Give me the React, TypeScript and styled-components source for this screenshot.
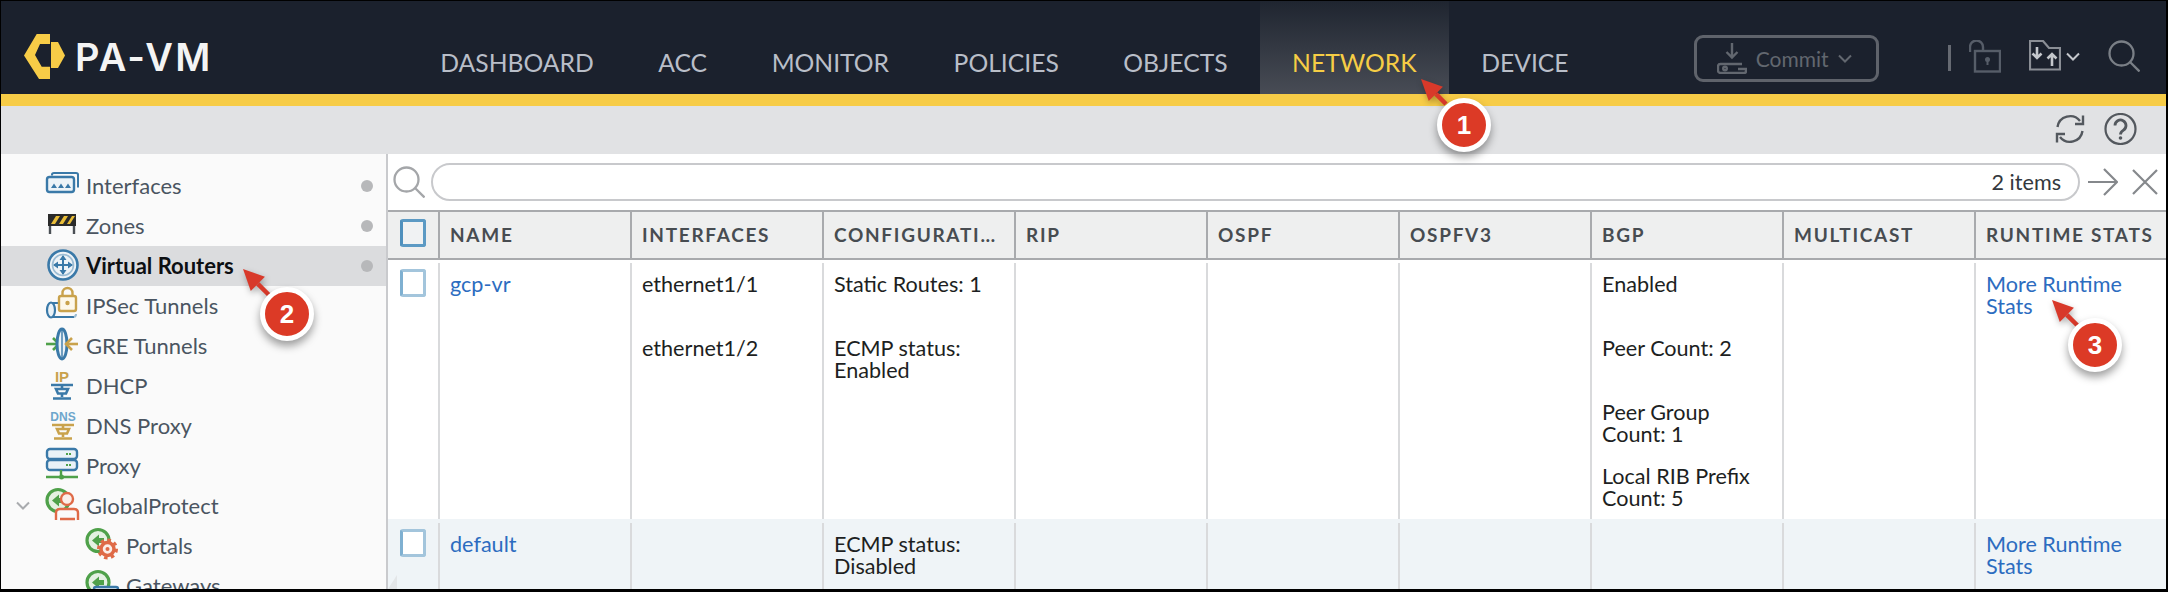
import React from "react";
import styled, { createGlobalStyle } from "styled-components";

const Global = createGlobalStyle`
  html, body { margin: 0; padding: 0; background: #000; }
  * { box-sizing: border-box; }
  body { font-family: Lato, "Open Sans", sans-serif; }
`;

const Frame = styled.div`
  position: relative;
  width: 2168px;
  height: 592px;
  overflow: hidden;
  display: flex;
  flex-direction: column;
  background: #fafafa;
  border-style: solid;
  border-color: #000;
  border-width: 1px 2px 3px 1px;
`;

const Header = styled.header`
  flex: none;
  height: 93px;
  background: #1b212d;
  display: flex;
  align-items: stretch;
`;

const Brand = styled.div`
  width: 407px;
  flex: none;
  padding: 33px 0 0 23px;
  display: flex;
  align-items: flex-start;
  gap: 10px;
`;

const BrandName = styled.span`
  font-family: Inter, sans-serif;
  font-weight: 600;
  font-size: 38px;
  line-height: 46px;
  letter-spacing: 2.2px;
  color: #f4f4f4;
`;

const Nav = styled.nav`
  display: flex;
`;

const Tab = styled.div<{ $active?: boolean }>`
  padding: 47px 32.25px 0;
  font-size: 24.7px;
  line-height: 30px;
  color: ${(p) => (p.$active ? "#f6cd45" : "#b9bec8")};
  background: ${(p) => (p.$active ? "linear-gradient(#1f2530, #484c55)" : "none")};
`;

const Tools = styled.div`
  display: flex;
  align-items: flex-start;
  margin-left: 93px;
  padding-top: 34px;
`;

const CommitButton = styled.div`
  width: 185px;
  height: 47px;
  border: 3px solid #5f636b;
  border-radius: 9px;
  display: flex;
  align-items: center;
  padding-left: 20px;
  gap: 9px;
  color: #62676f;
  font-size: 21px;
`;

const Pipe = styled.div`
  width: 3px;
  height: 26px;
  background: #666a72;
  margin: 10px 18px 0 69px;
`;

const Glyph = styled.svg`
  display: block;
  flex: none;
`;

const ToolIcon = styled(Glyph)<{ $gap?: number }>`
  margin-top: 5px;
  margin-right: ${(p) => p.$gap ?? 0}px;
`;

const ToolSlot = styled.div<{ $gap?: number; $top?: number }>`
  flex: none;
  margin-top: ${(p) => p.$top ?? 5}px;
  margin-right: ${(p) => p.$gap ?? 0}px;
`;

const CloseGlyph = styled(Glyph)`
  margin-left: 14px;
`;

const YellowBar = styled.div`
  flex: none;
  height: 12px;
  background: #f7cc47;
`;

const SubBar = styled.div`
  flex: none;
  height: 48px;
  background: #e1e2e4;
  display: flex;
  justify-content: flex-end;
  align-items: center;
  gap: 19px;
  padding: 0 29px 2px 0;
`;

const Body = styled.div`
  flex: 1;
  min-height: 0;
  display: flex;
`;

const Sidebar = styled.aside`
  flex: none;
  width: 387px;
  padding-top: 12px;
  background: #fafafa;
  border-right: 2px solid #c9cacd;
  overflow: hidden;
`;

const TreeRow = styled.div<{ $selected?: boolean; $depth?: number }>`
  height: 40px;
  display: flex;
  align-items: center;
  padding-left: ${(p) => 13 + (p.$depth ?? 0) * 40}px;
  padding-right: 13px;
  background: ${(p) => (p.$selected ? "#dbdcde" : "transparent")};
  font-size: 22px;
  font-weight: ${(p) => (p.$selected ? 700 : 400)};
  color: ${(p) => (p.$selected ? "#0d0f12" : "#4a5561")};
`;

const Chevron = styled.span`
  width: 32px;
  flex: none;
  display: flex;
  align-items: center;
`;

const TreeIcon = styled.svg`
  flex: none;
  display: block;
  width: 32px;
  height: 36px;
  margin-right: 8px;
  overflow: visible;
`;

const TreeLabel = styled.span`
  flex: 1;
  white-space: nowrap;
  padding-bottom: 2px;
`;

const Dot = styled.span`
  width: 12px;
  height: 12px;
  border-radius: 50%;
  background: #b7b8ba;
`;

const Main = styled.main`
  position: relative;
  flex: none;
  width: 1778px;
  display: flex;
  flex-direction: column;
  background: #fff;
`;

const SearchRow = styled.div`
  flex: none;
  height: 56px;
  display: flex;
  align-items: center;
  padding: 0 8px 0 5px;
`;

const SearchField = styled.div`
  width: 1649px;
  height: 38px;
  margin: 0 8px 1px 6px;
  border: 2px solid #c8c9cc;
  border-radius: 20px;
  display: flex;
  align-items: center;
  justify-content: flex-end;
  padding-right: 17px;
  font-size: 21.6px;
  color: #33383d;
`;

const Grid = styled.div`
  display: grid;
  grid-template-columns: 50px repeat(9, 192px);
`;

const HeadRow = styled(Grid)`
  flex: none;
  height: 50px;
  background: #eeefef;
  border-top: 2px solid #a8aaad;
  border-bottom: 2px solid #a8aaad;
`;

const HeadCell = styled.div`
  border-left: 2px solid #a8aaad;
  padding: 0 12px 0 10px;
  font-size: 19px;
  font-weight: 700;
  line-height: 46px;
  letter-spacing: 1.7px;
  color: #474c51;
  white-space: nowrap;
  overflow: hidden;
  text-overflow: ellipsis;
`;

const CheckCell = styled.div<{ $top: number }>`
  padding: ${(p) => p.$top}px 0 0 12px;
`;

const CheckBox = styled.div<{ $strong?: boolean }>`
  width: 26px;
  height: 28px;
  border: 3px solid ${(p) => (p.$strong ? "#5c9ac4" : "#a3c5dc")};
  border-left-color: ${(p) => (p.$strong ? "#4f90bd" : "#7fb0d1")};
  border-radius: 3px;
  background: ${(p) => (p.$strong ? "#f0f2f3" : "#fff")};
`;

const DataRow = styled(Grid)<{ $alt?: boolean; $top: number; $grow?: boolean }>`
  padding-top: ${(p) => p.$top}px;
  flex: ${(p) => (p.$grow ? 1 : "none")};
  background: ${(p) => (p.$alt ? "#eff4f7" : "#fff")};
`;

const DataCell = styled.div`
  border-left: 2px solid #d9dadc;
  padding: 10px 10px 10px 10px;
  font-size: 21.6px;
  line-height: 22px;
  color: #1d1f22;
`;

const Item = styled.div`
  min-height: 64px;
  &:last-child {
    min-height: 0;
  }
`;

const LinkText = styled.span`
  color: #2c6cc0;
`;

const ResizeGrip = styled.svg`
  position: absolute;
  left: 0;
  bottom: 0;
  display: block;
`;

const Overlay = styled.svg`
  position: absolute;
  left: -1px;
  top: -1px;
  pointer-events: none;
  filter: drop-shadow(1px 3px 3px rgba(0, 0, 0, 0.3));
`;

const Badge = styled.div<{ $x: number; $y: number }>`
  position: absolute;
  left: ${(p) => p.$x - 28}px;
  top: ${(p) => p.$y - 28}px;
  width: 54px;
  height: 54px;
  border-radius: 50%;
  background: #dc3a26;
  border: 5px solid #fff;
  box-shadow: 0 5px 9px rgba(0, 0, 0, 0.38);
  display: flex;
  align-items: center;
  justify-content: center;
  font-family: "Liberation Sans", Arial, sans-serif;
  font-weight: 700;
  font-size: 26px;
  color: #fff;
`;

const BLUE = "#3a79a8";
const GOLD = "#c9a24c";
const GREEN = "#4fa14a";
const ORANGE = "#df6a47";

const Logo = () => (
  <Glyph width="41" height="45" viewBox="0 0 41 45" fill="#f7cc47">
    <path d="M12.7 0H26v10H16l-5 11 6.7 11.700H26V45H15L0 21.500z" />
    <path d="M27 8h7l7 13.500-7 12.500h-7z" />
  </Glyph>
);

const CommitIcon = () => (
  <Glyph width="30" height="31" viewBox="0 0 30 31" fill="none" stroke="#62676f" strokeWidth="2.400">
    <path d="M15 0v14M9.500 9l5.500 5.500L20.500 9" />
    <path d="M25 21H3.500a2.500 2.500 0 0 0-2.500 2.500v4a2.500 2.500 0 0 0 2.500 2.500H27a2 2 0 0 0 2-2V26h-8" />
    <circle cx="8" cy="25.500" r="1.800" />
  </Glyph>
);

const SmallChevron = ({ color, w = 14 }: { color: string; w?: number }) => (
  <Glyph width={w} height="10" viewBox="0 0 14 10" fill="none" stroke={color} strokeWidth="2">
    <path d="M1 1.500l6 6 6-6" />
  </Glyph>
);

const LockIcon = () => (
  <ToolIcon width="32" height="33" viewBox="0 0 32 33" fill="none" stroke="#565d68" $gap={28}>
    <path d="M1 12V7a6.500 6.500 0 0 1 13 0v3" strokeWidth="2.400" />
    <rect x="6" y="11" width="25" height="20.500" strokeWidth="2.400" />
    <circle cx="18.500" cy="19.500" r="2.500" fill="#565d68" stroke="none" />
    <path d="M18.500 20v5" strokeWidth="2" />
  </ToolIcon>
);

const FolderIcon = () => (
  <ToolIcon width="32" height="31" viewBox="0 0 32 31" fill="none" stroke="#8a8e95" $gap={5}>
    <path d="M1 1h13l6 7h11v21.500H1z" strokeWidth="2.200" />
    <path d="M8 7v11M3.500 13.500L8 18l4.500-4.500M23 26V14M18.500 18.500L23 14l4.500 4.500" stroke="#c4c7cc" strokeWidth="2.600" />
  </ToolIcon>
);

const SearchGlass = ({ color, size }: { color: string; size: number }) => (
  <Glyph width={size} height={size} viewBox="0 0 32 32" fill="none" stroke={color} strokeWidth="2.300">
    <circle cx="13.500" cy="13.500" r="12" />
    <path d="M22 22l9.500 9.500" />
  </Glyph>
);

const RefreshIcon = () => (
  <Glyph width="30" height="30" viewBox="0 0 30 30" fill="none" stroke="#53585e" strokeWidth="2.400">
    <path d="M2.500 13A12.700 12.700 0 0 1 25 7" />
    <path d="M27.500 17A12.700 12.700 0 0 1 5 23" />
    <path d="M28 1.500V10h-8" />
    <path d="M2 28.500V20h8" />
  </Glyph>
);

const HelpIcon = () => (
  <Glyph width="33" height="32" viewBox="0 0 33 32" fill="none" stroke="#53585e" strokeWidth="2.200">
    <ellipse cx="16.500" cy="16" rx="15" ry="15" />
    <path d="M11 12.500a5.500 5.500 0 1 1 8.500 4.600c-2 1.300-3 2-3 4.400" strokeWidth="2.800" />
    <circle cx="16.500" cy="25" r="1.800" fill="#53585e" stroke="none" />
  </Glyph>
);

const NetTree = ({ color }: { color: string }) => (
  <g fill="none" stroke={color} strokeWidth="2.600">
    <path d="M3 15h22M14 15v3" />
    <path d="M8 19h12l-2 4.500h-8z" />
    <path d="M14 24v3M5 28.500h18" />
  </g>
);

type IconKind = "interfaces" | "zones" | "router" | "ipsec" | "gre" | "dhcp" | "dns" | "proxy" | "gp" | "portals" | "gateways";

const Globe = () => (
  <g>
    <circle cx="12" cy="12.500" r="11" fill="#e4f1e2" stroke={GREEN} strokeWidth="3.200" />
    <path d="M6 12.500l7-6v3.500h5v5h-5v3.500z" fill={GREEN} />
  </g>
);

const TreeGlyph = ({ kind }: { kind: IconKind }) => {
  const body = () => {
    switch (kind) {
      case "interfaces":
        return (
          <g>
            <path d="M6 7.500V6.500Q6 5 8 5h22q2 0 2 1.500v13" fill="none" stroke={BLUE} strokeWidth="2" />
            <rect x="1" y="9" width="27" height="15" rx="2.500" fill="#eef4f8" stroke={BLUE} strokeWidth="2.400" />
            <path d="M5 20l3-4.500 3 4.500zM12 20l3-4.500 3 4.500zM19 20l3-4.500 3 4.500z" fill={BLUE} />
          </g>
        );
      case "zones":
        return (
          <g>
            <rect x="2" y="6" width="28" height="12" fill="#2a2a2a" />
            <path d="M5 16l5-8h4l-5 8zM13 16l5-8h4l-5 8zM21 16l5-8h3l-5 8z" fill="#e9bd37" />
            <path d="M4 18v8M28 18v8" stroke="#4a4f54" strokeWidth="2.400" />
          </g>
        );
      case "router":
        return (
          <g fill="none" stroke={BLUE}>
            <circle cx="17" cy="17" r="14.500" strokeWidth="2.600" fill="#eef3f7" />
            <circle cx="17" cy="17" r="10.500" stroke="#9dbdd4" strokeWidth="1.600" />
            <path d="M17 8v18M8 17h18" strokeWidth="2" />
            <path d="M13.500 12l3.500-5 3.500 5zM13.500 22l3.500 5 3.500-5zM12 13.500l-5 3.500 5 3.500zM22 13.500l5 3.500-5 3.500z" fill={BLUE} stroke="none" />
          </g>
        );
      case "ipsec":
        return (
          <g fill="none">
            <path d="M5 15h11M5 29h23" stroke={BLUE} strokeWidth="2.200" />
            <ellipse cx="5" cy="22" rx="4" ry="7.500" stroke={BLUE} strokeWidth="2.200" fill="#eaf2f7" />
            <path d="M28 29a3 3 0 0 0 2-3" stroke="#9dbdd4" strokeWidth="2" />
            <rect x="13" y="8" width="17" height="15" rx="2" fill="#fdf8ea" stroke={GOLD} strokeWidth="2.400" />
            <path d="M16.500 8V5a5 5 0 0 1 10 0v3" stroke={GOLD} strokeWidth="2.400" />
            <circle cx="21.500" cy="15" r="2.200" fill={GOLD} />
          </g>
        );
      case "gre":
        return (
          <g fill="none">
            <path d="M0 16h11" stroke={GREEN} strokeWidth="2.600" />
            <path d="M7 10l6 6-6 6" stroke={GREEN} strokeWidth="2.600" />
            <ellipse cx="16" cy="16" rx="5" ry="15" fill="#eaf2f7" stroke={BLUE} strokeWidth="3" />
            <path d="M16 1v30" stroke={BLUE} strokeWidth="1.400" />
            <path d="M32 16H22" stroke={GOLD} strokeWidth="2.600" />
            <path d="M26 10l-6 6 6 6" stroke={GOLD} strokeWidth="2.600" />
          </g>
        );
      case "dhcp":
        return (
          <g>
            <text x="16" y="14" textAnchor="middle" fontFamily="Liberation Sans, sans-serif" fontWeight="700" fontSize="15" fill={GOLD}>IP</text>
            <g transform="translate(2 2)"><NetTree color={BLUE} /></g>
          </g>
        );
      case "dns":
        return (
          <g>
            <text x="17" y="13" textAnchor="middle" fontFamily="Liberation Sans, sans-serif" fontWeight="700" fontSize="12" fill="#6ea6cc">DNS</text>
            <g transform="translate(3 2)"><NetTree color={GOLD} /></g>
          </g>
        );
      case "proxy":
        return (
          <g>
            <rect x="1" y="1" width="30" height="10" rx="3" fill="#eaf2f7" stroke={BLUE} strokeWidth="2.400" />
            <rect x="1" y="12" width="30" height="10" rx="3" fill="#eaf2f7" stroke={BLUE} strokeWidth="2.400" />
            <path d="M20 6h6M20 17h6" stroke={GREEN} strokeWidth="2" strokeDasharray="2 1" />
            <path d="M15 22v5M0 29h32" stroke={GREEN} strokeWidth="2.400" />
            <circle cx="15.500" cy="29" r="2.500" fill={GREEN} />
          </g>
        );
      case "gp":
        return (
          <g>
            <Globe />
            <circle cx="21" cy="11" r="6" fill="#fbeee9" stroke={ORANGE} strokeWidth="2.400" />
            <path d="M10 32v-7q0-4 4-4h14q4 0 4 4v7M14 31h15" fill="#fafafa" stroke={ORANGE} strokeWidth="2.400" />
          </g>
        );
      case "portals":
        return (
          <g>
            <Globe />
            <circle cx="21.500" cy="21" r="6.500" fill="#fbeee9" stroke={ORANGE} strokeWidth="3.500" />
            <circle cx="21.500" cy="21" r="9" fill="none" stroke={ORANGE} strokeWidth="3" strokeDasharray="3.500 3.500" />
            <circle cx="21.500" cy="21" r="2" fill={ORANGE} />
          </g>
        );
      case "gateways":
        return (
          <g transform="translate(0 2)">
            <Globe />
            <rect x="8" y="17" width="24" height="12" rx="2" fill="#eaf2f7" stroke={BLUE} strokeWidth="2.400" />
          </g>
        );
    }
  };
  return <TreeIcon viewBox="0 0 32 36">{body()}</TreeIcon>;
};

const treeItems: { label: string; icon: IconKind; dot?: boolean; selected?: boolean; depth?: number; open?: boolean }[] = [
  { label: "Interfaces", icon: "interfaces", dot: true },
  { label: "Zones", icon: "zones", dot: true },
  { label: "Virtual Routers", icon: "router", dot: true, selected: true },
  { label: "IPSec Tunnels", icon: "ipsec" },
  { label: "GRE Tunnels", icon: "gre" },
  { label: "DHCP", icon: "dhcp" },
  { label: "DNS Proxy", icon: "dns" },
  { label: "Proxy", icon: "proxy" },
  { label: "GlobalProtect", icon: "gp", open: true },
  { label: "Portals", icon: "portals", depth: 1 },
  { label: "Gateways", icon: "gateways", depth: 1 },
];

const navItems = ["DASHBOARD", "ACC", "MONITOR", "POLICIES", "OBJECTS", "NETWORK", "DEVICE"];
const columns = ["NAME", "INTERFACES", "CONFIGURATION", "RIP", "OSPF", "OSPFV3", "BGP", "MULTICAST", "RUNTIME STATS"];

type Row = { name: string; cells: string[][]; alt?: boolean; top: number; grow?: boolean };
const rows: Row[] = [
  {
    name: "gcp-vr",
    top: 3,
    cells: [
      ["ethernet1/1", "ethernet1/2"],
      ["Static Routes: 1", "ECMP status: Enabled"],
      [],
      [],
      [],
      ["Enabled", "Peer Count: 2", "Peer Group Count: 1", "Local RIB Prefix Count: 5"],
      [],
    ],
  },
  {
    name: "default",
    alt: true,
    grow: true,
    top: 4,
    cells: [[], ["ECMP status: Disabled"], [], [], [], [], []],
  },
];

const Arrow = ({ x1, y1, x2, y2 }: { x1: number; y1: number; x2: number; y2: number }) => {
  const len = Math.hypot(x2 - x1, y2 - y1);
  const ux = (x2 - x1) / len;
  const uy = (y2 - y1) / len;
  const bx = x2 - ux * 21;
  const by = y2 - uy * 21;
  const px = -uy * 10;
  const py = ux * 10;
  return (
    <g>
      <line x1={x1} y1={y1} x2={bx} y2={by} stroke="#d8392a" strokeWidth="4.500" />
      <polygon points={`${x2},${y2} ${bx + px},${by + py} ${bx - px},${by - py}`} fill="#d8392a" />
    </g>
  );
};

export default function App() {
  return (
    <>
      <Global />
      <Frame>
        <Header>
          <Brand>
            <Logo />
            <BrandName>PA-VM</BrandName>
          </Brand>
          <Nav>
            {navItems.map((n) => (
              <Tab key={n} $active={n === "NETWORK"}>
                {n}
              </Tab>
            ))}
          </Nav>
          <Tools>
            <CommitButton>
              <CommitIcon />
              <span>Commit</span>
              <SmallChevron color="#62676f" />
            </CommitButton>
            <Pipe />
            <LockIcon />
            <FolderIcon />
            <ToolSlot $gap={28} $top={17}>
              <SmallChevron color="#c4c7cc" />
            </ToolSlot>
            <ToolSlot>
              <SearchGlass color="#7a7f86" size={32} />
            </ToolSlot>
          </Tools>
        </Header>
        <YellowBar />
        <SubBar>
          <RefreshIcon />
          <HelpIcon />
        </SubBar>
        <Body>
          <Sidebar>
            {treeItems.map((t) => (
              <TreeRow key={t.label} $selected={t.selected} $depth={t.depth}>
                <Chevron>{t.open && <SmallChevron color="#a9abae" w={18} />}</Chevron>
                <TreeGlyph kind={t.icon} />
                <TreeLabel>{t.label}</TreeLabel>
                {t.dot && <Dot />}
              </TreeRow>
            ))}
          </Sidebar>
          <Main>
            <SearchRow>
              <SearchGlass color="#a4a6a9" size={32} />
              <SearchField>2 items</SearchField>
              <Glyph width="30" height="28" viewBox="0 0 30 28" fill="none" stroke="#85888c" strokeWidth="2.200">
                <path d="M0 14h28M16 1l13 13-13 13" />
              </Glyph>
              <CloseGlyph width="26" height="26" viewBox="0 0 26 26" fill="none" stroke="#85888c" strokeWidth="2.200">
                <path d="M1 1l24 24M25 1L1 25" />
              </CloseGlyph>
            </SearchRow>
            <HeadRow>
              <CheckCell $top={7}>
                <CheckBox $strong />
              </CheckCell>
              {columns.map((c) => (
                <HeadCell key={c}>{c}</HeadCell>
              ))}
            </HeadRow>
            {rows.map((r) => (
              <DataRow key={r.name} $alt={r.alt} $top={r.top} $grow={r.grow}>
                <CheckCell $top={6}>
                  <CheckBox />
                </CheckCell>
                <DataCell>
                  <LinkText>{r.name}</LinkText>
                </DataCell>
                {r.cells.map((items, i) => (
                  <DataCell key={i}>
                    {items.map((t) => (
                      <Item key={t}>{t}</Item>
                    ))}
                  </DataCell>
                ))}
                <DataCell>
                  <LinkText>More Runtime Stats</LinkText>
                </DataCell>
              </DataRow>
            ))}
            <ResizeGrip width="9" height="14" viewBox="0 0 9 14">
              <polygon points="0,14 9,14 9,0" fill="#e3e6e8" />
            </ResizeGrip>
          </Main>
        </Body>
        <Overlay width="2168" height="592">
          <Arrow x1={1446} y1={104} x2={1421} y2={79} />
          <Arrow x1={270} y1={296} x2={243} y2={269} />
          <Arrow x1={2079} y1={327} x2={2052} y2={300} />
        </Overlay>
        <Badge $x={1464} $y={125}>1</Badge>
        <Badge $x={287} $y={314}>2</Badge>
        <Badge $x={2095} $y={345}>3</Badge>
      </Frame>
    </>
  );
}
